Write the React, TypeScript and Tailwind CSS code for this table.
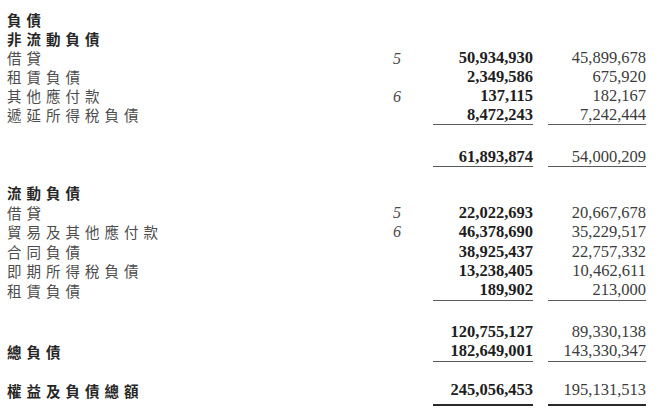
import React from "react";

type Line = "none" | "single" | "thick";

interface RowProps {
  label?: string;
  note?: string;
  cur?: string;
  prev?: string;
  heading?: boolean;
  line?: Line;
  className?: string;
}

// Une ligne du bilan : libellé, note, exercice courant (gras), exercice précédent
function Row({ label, note, cur, prev, heading, line = "none", className = "" }: RowProps) {
  const border =
    line === "single"
      ? "border-b border-[#5a5a5a]"
      : line === "thick"
        ? "border-b-2 border-[#2a2a2a]"
        : "";
  return (
    <div className={`flex items-stretch ${className}`}>
      <div
        className={`flex w-[386px] items-center font-['Noto_Sans_CJK_TC',sans-serif] text-[14.5px] leading-none tracking-[5px] ${
          heading ? "font-bold text-[#262626]" : "text-[#4d4d4d]"
        }`}
      >
        {label}
      </div>
      <div className="flex w-[40px] items-center font-['Liberation_Serif',serif] text-[16px] italic leading-none text-[#4a4a4a]">
        {note}
      </div>
      <div
        className={`flex w-[100px] items-center justify-end font-['Liberation_Serif',serif] text-[16.5px] font-bold leading-none text-[#1e1e1e] ${border}`}
      >
        {cur}
      </div>
      <div className="w-[15px]" />
      <div
        className={`flex w-[98px] items-center justify-end font-['Liberation_Serif',serif] text-[16.5px] leading-none text-[#3c3c3c] ${border}`}
      >
        {prev}
      </div>
    </div>
  );
}

export default function App() {
  return (
    <div className="h-[410px] w-[660px] overflow-hidden bg-white pl-[7px] pt-[11px]">
      {/* 非流動負債 */}
      <Row label="負債" heading className="h-[19px]" />
      <Row label="非流動負債" heading className="h-[19px]" />
      <Row label="借貸" note="5" cur="50,934,930" prev="45,899,678" className="h-[19px]" />
      <Row label="租賃負債" cur="2,349,586" prev="675,920" className="h-[19px]" />
      <Row label="其他應付款" note="6" cur="137,115" prev="182,167" className="h-[19px]" />
      <Row label="遞延所得稅負債" cur="8,472,243" prev="7,242,444" line="single" className="h-[19px]" />

      <Row cur="61,893,874" prev="54,000,209" line="single" className="mt-[23px] h-[19px]" />

      {/* 流動負債 */}
      <Row label="流動負債" heading className="mt-[16px] h-[20px]" />
      <Row label="借貸" note="5" cur="22,022,693" prev="20,667,678" className="h-[19.5px]" />
      <Row label="貿易及其他應付款" note="6" cur="46,378,690" prev="35,229,517" className="h-[19.5px]" />
      <Row label="合同負債" cur="38,925,437" prev="22,757,332" className="h-[19.5px]" />
      <Row label="即期所得稅負債" cur="13,238,405" prev="10,462,611" className="h-[19.5px]" />
      <Row label="租賃負債" cur="189,902" prev="213,000" line="single" className="h-[19.5px]" />

      <Row cur="120,755,127" prev="89,330,138" className="mt-[22px] h-[19.5px]" />
      <Row label="總負債" heading cur="182,649,001" prev="143,330,347" line="single" className="h-[19.5px]" />

      <Row
        label="權益及負債總額"
        heading
        cur="245,056,453"
        prev="195,131,513"
        line="thick"
        className="mt-[19px] h-[25px] [&>div]:pb-[4px]"
      />
    </div>
  );
}
